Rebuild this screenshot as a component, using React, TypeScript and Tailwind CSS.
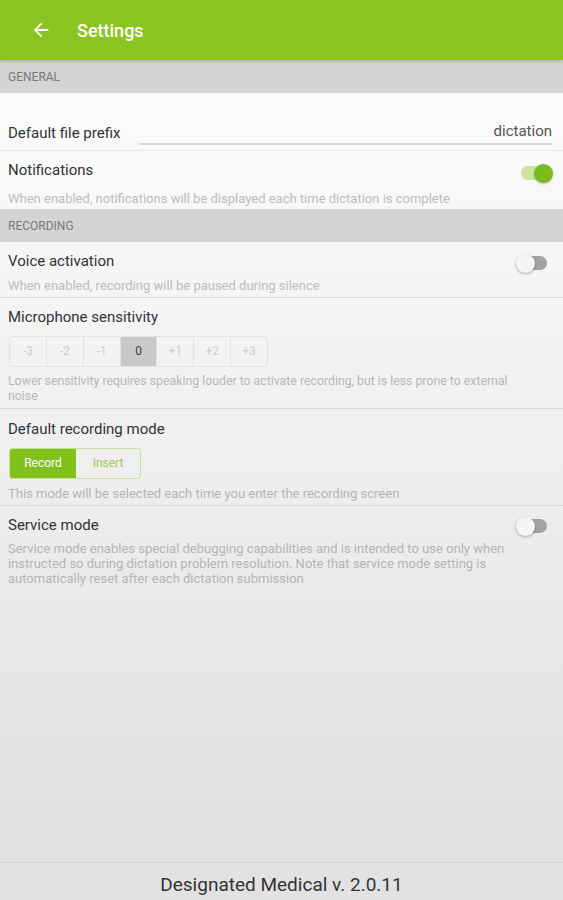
import React from "react";

function Toggle({ on }: { on: boolean }) {
  if (on) {
    return (
      <div className="relative w-[34px] h-[20px] flex items-center">
        <div className="absolute left-[2px] right-[4px] h-[14px] rounded-full bg-[#c9e5a0]" />
        <div className="absolute right-0 w-[19px] h-[19px] rounded-full bg-[#7dbb1d] shadow-[0_1px_2px_rgba(0,0,0,0.25)]" />
      </div>
    );
  }
  return (
    <div className="relative w-[34px] h-[20px] flex items-center">
      <div className="absolute left-[4px] right-[3px] h-[14px] rounded-full bg-[#a3a3a3]" />
      <div className="absolute left-0 w-[19px] h-[19px] rounded-full bg-[#f5f5f5] shadow-[0_1px_3px_rgba(0,0,0,0.3)]" />
    </div>
  );
}

function SectionHeader({ label }: { label: string }) {
  return (
    <div className="h-[33px] bg-[#d4d4d4] flex items-center px-[8px] text-[12px] text-[#7a7a7a]">
      {label}
    </div>
  );
}

export default function App() {
  const sens = ["-3", "-2", "-1", "0", "+1", "+2", "+3"];
  return (
    <div
      className="w-[563px] h-[900px] flex flex-col overflow-hidden bg-gradient-to-b from-[#ffffff] to-[#dfdfdf]"
      style={{ fontFamily: "Roboto, 'Noto Sans', sans-serif" }}
    >
      <div className="h-[60px] bg-[#89c420] flex items-center shadow-[0_2px_3px_rgba(0,0,0,0.15)] relative z-10">
        <svg width="22" height="22" viewBox="0 0 24 24" className="ml-[30px]">
          <path d="M20 11H7.83l5.59-5.59L12 4l-8 8 8 8 1.41-1.41L7.83 13H20v-2z" fill="#ffffff" />
        </svg>
        <div className="ml-[25px] text-[18px] font-medium text-white">Settings</div>
      </div>
      <SectionHeader label="GENERAL" />

      <div className="h-[58px] flex items-end pb-[5px] pl-[8px] pr-[11px] border-b border-[#e6e6e6]">
        <div className="text-[15px] text-[#333] pb-[1px]">Default file prefix</div>
        <div className="ml-[19px] flex-1 border-b-2 border-[#d9d9d9] text-right text-[15px] text-[#555] pb-[1px]">
          dictation
        </div>
      </div>

      <div className="h-[58px] px-[8px] pt-[8px] relative">
        <div className="text-[15px] text-[#333]">Notifications</div>
        <div className="mt-[7px] text-[13px] text-[#bdbdbd]">
          When enabled, notifications will be displayed each time dictation is complete
        </div>
        <div className="absolute right-[10px] top-[12px]">
          <Toggle on={true} />
        </div>
      </div>

      <SectionHeader label="RECORDING" />

      <div className="h-[56px] px-[8px] pt-[8px] relative border-b border-[#dedede]">
        <div className="text-[15px] text-[#333]">Voice activation</div>
        <div className="mt-[3px] text-[13px] text-[#bdbdbd]">
          When enabled, recording will be paused during silence
        </div>
        <div className="absolute right-[13px] top-[11px]">
          <Toggle on={false} />
        </div>
      </div>

      <div className="h-[111px] px-[8px] pt-[8px] border-b border-[#dcdcdc]">
        <div className="text-[15px] text-[#333]">Microphone sensitivity</div>
        <div className="mt-[7px] flex w-[259px] h-[31px] border border-[#e2e2e2] rounded-[3px] overflow-hidden ml-[1px]">
          {sens.map((s, i) => (
            <div
              key={s}
              className={
                "flex-1 flex items-center justify-center text-[12px] " +
                (i > 0 ? "border-l border-[#e2e2e2] " : "") +
                (s === "0" ? "bg-[#c9c9c9] text-[#444]" : "text-[#cfcfcf]")
              }
            >
              {s}
            </div>
          ))}
        </div>
        <div className="mt-[7px] text-[12.3px] leading-[15px] text-[#b8b8b8] pr-[40px]">
          Lower sensitivity requires speaking louder to activate recording, but is less prone to external noise
        </div>
      </div>

      <div className="h-[97px] px-[8px] pt-[9px] border-b border-[#d8d8d8]">
        <div className="text-[15px] text-[#333]">Default recording mode</div>
        <div className="mt-[7px] flex w-[132px] h-[31px] border border-[#c6e39a] rounded-[3px] overflow-hidden ml-[1px]">
          <div className="w-[66px] bg-[#80c21b] text-white text-[12px] flex items-center justify-center">Record</div>
          <div className="flex-1 text-[#9ccc5a] text-[12px] flex items-center justify-center">Insert</div>
        </div>
        <div className="mt-[5px] text-[13px] text-[#b5b5b5]">
          This mode will be selected each time you enter the recording screen
        </div>
      </div>

      <div className="px-[8px] pt-[8px] relative">
        <div className="text-[15px] text-[#333]">Service mode</div>
        <div className="mt-[4px] text-[13px] leading-[15px] text-[#b5b5b5] pr-[50px]">
          Service mode enables special debugging capabilities and is intended to use only when instructed so during dictation problem resolution. Note that service mode setting is automatically reset after each dictation submission
        </div>
        <div className="absolute right-[13px] top-[10px]">
          <Toggle on={false} />
        </div>
      </div>

      <div className="flex-1" />
      <div className="h-[38px] border-t border-[#d2d2d2] bg-[#e2e2e2] flex items-center justify-center text-[19px] text-[#333] pt-[7px]">
        Designated Medical v. 2.0.11
      </div>
    </div>
  );
}
